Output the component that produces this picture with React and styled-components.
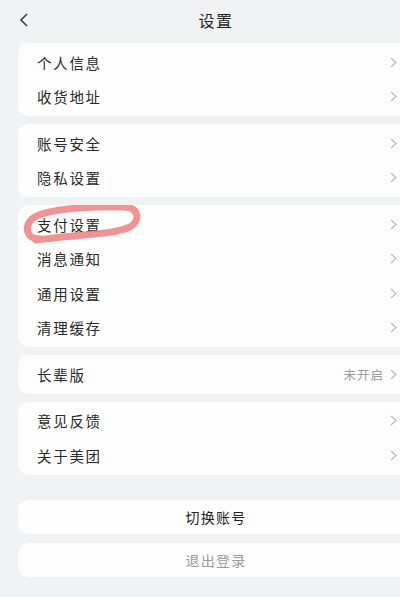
import React from "react";
import styled, { createGlobalStyle } from "styled-components";

const Global = createGlobalStyle`
  html, body { margin: 0; padding: 0; background: #f1f2f4; overflow: hidden; }
  body { font-family: "Noto Sans CJK SC", "Noto Sans", sans-serif; }
`;

const Page = styled.div`
  width: 432px;
  min-height: 597px;
  background: #f1f2f4;
  padding: 0 18px;
  box-sizing: border-box;
  display: flex;
  flex-direction: column;
`;

const Header = styled.div`
  position: relative;
  height: 43px;
  display: flex;
  align-items: center;
  justify-content: center;
`;

const Back = styled.div`
  position: absolute;
  left: 1px;
  top: 13px;
  width: 14px;
  height: 14px;
  display: flex;
`;

const Title = styled.div`
  font-size: 16px;
  color: #222;
  letter-spacing: 1.5px;
  margin-top: -3px;
`;

const Card = styled.div`
  background: #fdfdfd;
  border-radius: 10px;
  padding: 2px 0;
  margin-bottom: ${(p) => p.$gap || 8}px;
  position: relative;
`;

const Row = styled.div`
  height: 34.5px;
  display: flex;
  align-items: center;
  padding: 0 17px 0 19px;
  font-size: 14.5px;
  color: #2a2a2a;
  letter-spacing: 1.7px;
`;

const Label = styled.span`
  flex: 1;
`;

const Extra = styled.span`
  font-size: 12.5px;
  color: #9a9a9a;
  letter-spacing: 1px;
  margin-right: 6px;
`;

const Button = styled.div`
  background: #fdfdfd;
  border-radius: 10px;
  height: 34px;
  display: flex;
  align-items: center;
  justify-content: center;
  font-size: 14px;
  letter-spacing: 1.2px;
  color: ${(p) => (p.$muted ? "#9a9a9a" : "#222")};
  margin-bottom: 9px;
`;

const Mark = styled.svg`
  position: absolute;
  left: 0;
  top: 0;
  pointer-events: none;
`;

const Chevron = () => (
  <svg width="7" height="11" viewBox="0 0 7 11">
    <polyline points="1,1 6,5.5 1,10" fill="none" stroke="#b8b8b8" strokeWidth="1.1" />
  </svg>
);

const Item = ({ label, extra }) => (
  <Row>
    <Label>{label}</Label>
    {extra && <Extra>{extra}</Extra>}
    <Chevron />
  </Row>
);

export default function App() {
  return (
    <>
      <Global />
      <Page>
        <Header>
          <Back>
            <svg width="10" height="14" viewBox="0 0 10 14">
              <polyline points="8,1 2,7 8,13" fill="none" stroke="#333" strokeWidth="1.5" />
            </svg>
          </Back>
          <Title>设置</Title>
        </Header>
        <Card>
          <Item label="个人信息" />
          <Item label="收货地址" />
        </Card>
        <Card>
          <Item label="账号安全" />
          <Item label="隐私设置" />
        </Card>
        <Card>
          <Item label="支付设置" />
          <Item label="消息通知" />
          <Item label="通用设置" />
          <Item label="清理缓存" />
          <Mark width="140" height="42" viewBox="0 0 140 42">
            <path
              d="M 22 34 C 8 34, 6 22, 14 14 C 26 3, 80 1, 106 2 C 122 3, 122 16, 112 22 C 96 30, 52 30, 18 35"
              fill="none"
              stroke="#f0868a"
              strokeWidth="7"
              strokeLinecap="round"
              strokeLinejoin="round"
              opacity="0.9"
            />
          </Mark>
        </Card>
        <Card>
          <Item label="长辈版" extra="未开启" />
        </Card>
        <Card $gap={25}>
          <Item label="意见反馈" />
          <Item label="关于美团" />
        </Card>
        <Button>切换账号</Button>
        <Button $muted>退出登录</Button>
      </Page>
    </>
  );
}
